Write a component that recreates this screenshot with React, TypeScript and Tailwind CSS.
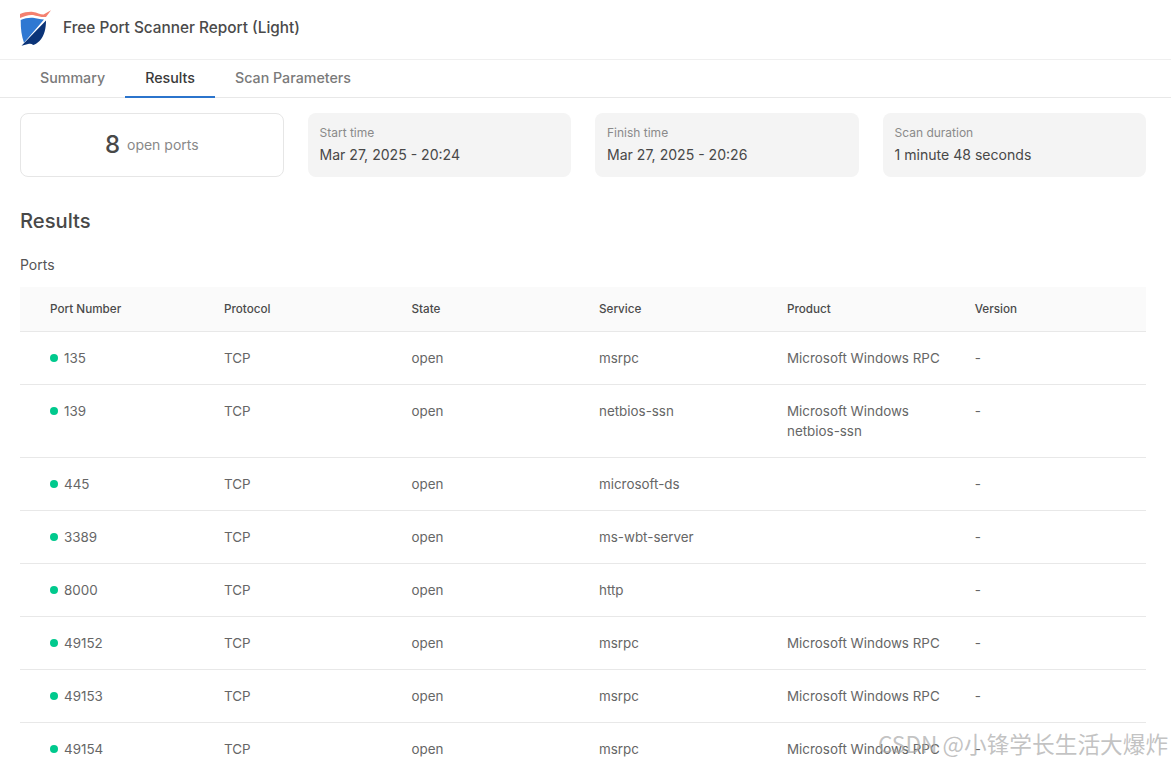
const ports = [
  { port: '135', service: 'msrpc', product: 'Microsoft Windows RPC' },
  { port: '139', service: 'netbios-ssn', product: 'Microsoft Windows netbios-ssn' },
  { port: '445', service: 'microsoft-ds', product: '' },
  { port: '3389', service: 'ms-wbt-server', product: '' },
  { port: '8000', service: 'http', product: '' },
  { port: '49152', service: 'msrpc', product: 'Microsoft Windows RPC' },
  { port: '49153', service: 'msrpc', product: 'Microsoft Windows RPC' },
  { port: '49154', service: 'msrpc', product: 'Microsoft Windows RPC' },
]

const columns = ['Port Number', 'Protocol', 'State', 'Service', 'Product', 'Version']
const gridCols = 'grid grid-cols-[174px_187.5px_187.5px_188px_187.7px_1fr] pl-[30px]'

const Logo = () => (
  <svg width="34" height="38" viewBox="18 8 34 38" className="shrink-0">
    <path d="M20 13 C24 11.5 29 10.5 33 11 C37 11.5 40 13.5 43.5 13.5 L51 9.3 L46 16 C42 16.5 37 15 33 14 C29 13.5 24 15 20 17 Z" fill="#f4806f" />
    <path d="M20.7 19 C25 17.2 29 16.4 33 16.8 C36.5 17.3 40 18.6 44 18.6 L24 41.7 C21.5 35 20.7 28 20.7 19 Z" fill="#2f78d2" />
    <path d="M46 19.5 C46 27 44.5 35 39.5 40 C37 42.5 35 43.6 33.2 44 C31.8 42.8 30.5 42.5 29 42.8 L21.5 44.8 Z" fill="#0b3478" />
  </svg>
)

const StatCard = ({ label, value }: { label: string; value: string }) => (
  <div className="rounded-lg bg-[#f4f4f4] px-3 pt-[10px]">
    <div className="text-xs leading-[20px] text-[#8a8a8a]">{label}</div>
    <div className="mt-[1px] text-[14.07px] leading-[22px] text-[#484848]">{value}</div>
  </div>
)

export default function App() {
  return (
    <div className="relative h-[764px] w-[1171px] overflow-hidden bg-white font-['Inter',sans-serif] text-[#555]">
      <header className="flex h-[60px] items-center gap-[11px] border-b border-[#efefef] pl-[18px] pb-1">
        <Logo />
        <h1 className="text-[15.35px] font-medium text-[#4a4a4a]">Free Port Scanner Report (Light)</h1>
      </header>

      <nav className="flex h-[38px] border-b border-[#e8e8e8] pl-5 text-[14.25px] font-medium">
        <div className="flex h-[38px] items-center border-b-2 border-transparent px-5 text-[#7a7a7a]">Summary</div>
        <div className="flex h-[38px] items-center border-b-2 border-[#2b74cc] px-5 text-[#3a3a3a]">Results</div>
        <div className="flex h-[38px] items-center border-b-2 border-transparent px-5 text-[#7a7a7a]">Scan Parameters</div>
      </nav>

      <main className="w-[1126px] ml-5 pt-[15px]">
        <div className="grid h-16 grid-cols-4 gap-6">
          <div className="flex items-center justify-center gap-[7px] rounded-lg border border-[#e6e6e6]">
            <span className="text-2xl font-medium text-[#484848]">8</span>
            <span className="text-sm text-[#888]">open ports</span>
          </div>
          <StatCard label="Start time" value="Mar 27, 2025 - 20:24" />
          <StatCard label="Finish time" value="Mar 27, 2025 - 20:26" />
          <StatCard label="Scan duration" value="1 minute 48 seconds" />
        </div>

        <h2 className="mt-[30px] text-[20.2px] font-medium leading-[28px] text-[#484848]">Results</h2>
        <div className="mt-[20px] text-sm leading-[20px] text-[#555]">Ports</div>

        <div className="mt-3">
          <div className={`${gridCols} h-[45px] items-center border-b border-[#e8e8e8] bg-[#fafafa] pt-px text-[11.7px] font-medium text-[#4a4a4a]`}>
            {columns.map((c) => (
              <div key={c}>{c}</div>
            ))}
          </div>
          {ports.map((p) => (
            <div key={p.port} className={`${gridCols} border-b border-[#e8e8e8] py-4 text-[13.4px] leading-[20px] text-[#666]`}>
              <div className="flex h-5 items-center gap-[6px]">
                <span className="h-2 w-2 rounded-full bg-[#00c98d]" />
                {p.port}
              </div>
              <div>TCP</div>
              <div>open</div>
              <div>{p.service}</div>
              <div className="pr-4">{p.product}</div>
              <div>-</div>
            </div>
          ))}
        </div>
      </main>

      <div className="absolute left-[878px] top-[729px] font-['Noto_Sans_CJK_SC',sans-serif] text-[22.7px] leading-[30px] whitespace-nowrap text-[#a8a8a8]/70">
        CSDN @小锋学长生活大爆炸
      </div>
    </div>
  )
}
